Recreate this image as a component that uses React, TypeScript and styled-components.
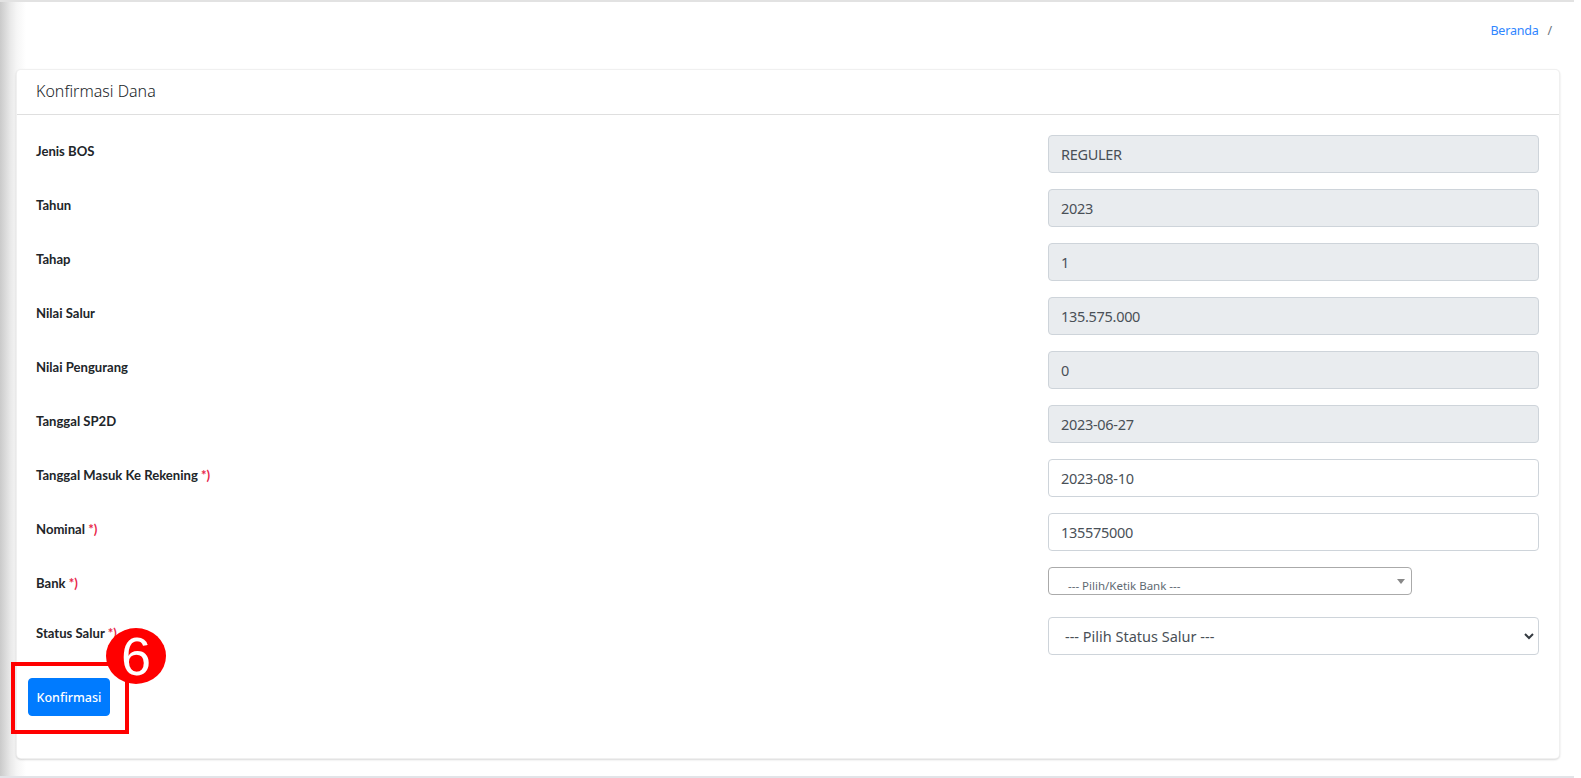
import React from "react";
import styled, { createGlobalStyle } from "styled-components";

const Global = createGlobalStyle`
  html, body { margin: 0; padding: 0; height: 100%; overflow: hidden; background: #fff; }
  body { font-family: "Noto Sans", "Open Sans", sans-serif; color: #212529; }
`;

const Page = styled.div`
  position: relative;
  width: 1581px;
  height: 778px;
  display: flex;
  flex-direction: column;
  background: #fff;
  overflow: hidden;
`;
const LeftShade = styled.div`
  position: absolute;
  left: 0;
  top: 0;
  bottom: 0;
  width: 26px;
  background: linear-gradient(to right, #cacaca 0, #e9e9e9 40%, #f6f6f6 65%, rgba(255,255,255,0) 100%);
  pointer-events: none;
`;
const Content = styled.main`
  position: relative;
  width: 1574px;
  height: 778px;
  box-sizing: border-box;
  border-top: 2px solid #e2e2e2;
  border-bottom: 2px solid #e2e4e8;
  padding: 0 14px 0 16px;
  display: flex;
  flex-direction: column;
`;
const Crumbs = styled.nav`
  height: 67px;
  box-sizing: border-box;
  padding: 20px 8px 0 0;
  display: flex;
  justify-content: flex-end;
  gap: 9px;
  font-size: 12.5px;
  letter-spacing: -0.2px;
  line-height: 18px;
`;
const CrumbLink = styled.a`
  color: #2f86ff;
`;
const CrumbSep = styled.span`
  color: #6c757d;
`;
const Card = styled.section`
  width: 1544px;
  height: 690px;
  box-sizing: border-box;
  background: #fff;
  border: 1px solid rgba(0,0,0,.06);
  border-radius: 5px;
  box-shadow: 0 1px 2px rgba(0,0,0,.15);
  display: flex;
  flex-direction: column;
`;
const CardHeader = styled.header`
  height: 45px;
  box-sizing: border-box;
  padding: 0 19px 2px;
  display: flex;
  align-items: center;
  border-bottom: 1px solid #dfdfdf;
  font-size: 16px;
  font-weight: 300;
  color: #212529;
`;
const CardBody = styled.div`
  padding: 20px 19px 0 19px;
  display: flex;
  flex-direction: column;
  gap: 16px;
`;
const Row = styled.div<{ $short?: boolean }>`
  height: ${(p) => (p.$short ? "34px" : "38px")};
  display: grid;
  grid-template-columns: 1012px 1fr;
`;
const Label = styled.label`
  font-family: "Lato", "Noto Sans", sans-serif;
  font-size: 13.1px;
  font-weight: 700;
  line-height: 18px;
  padding-top: 7px;
  color: #212529;
`;
const Req = styled.span`
  color: #e8264a;
`;
const Field = styled.div<{ $disabled?: boolean }>`
  height: 38px;
  width: 491px;
  box-sizing: border-box;
  border: 1px solid #ced4da;
  border-radius: 4px;
  background: ${(p) => (p.$disabled ? "#e9ecef" : "#fff")};
  padding: 0 12px;
  display: flex;
  align-items: center;
  font-size: 14.5px;
  letter-spacing: -0.3px;
  color: #495057;
`;
const BankSelect = styled.div`
  position: relative;
  width: 364px;
  height: 28px;
  box-sizing: border-box;
  border: 1px solid #aaa;
  border-radius: 4px;
  background: #fff;
  padding: 10px 0 0 19px;
  font-size: 11.5px;
  line-height: 16px;
  color: #5f6a72;
  overflow: hidden;
`;
const BankArrow = styled.span`
  position: absolute;
  right: 6px;
  top: 11px;
  width: 0;
  height: 0;
  border-left: 4px solid transparent;
  border-right: 4px solid transparent;
  border-top: 5px solid #888;
`;
const StatusSelect = styled(Field)`
  justify-content: space-between;
  padding: 0 3px 0 16px;
  letter-spacing: 0;
`;
const Footer = styled.div`
  padding: 23px 0 0 11px;
`;
const Button = styled.button`
  width: 82px;
  height: 38px;
  box-sizing: border-box;
  border: 1px solid #007bff;
  border-radius: 4px;
  background: #007bff;
  color: #fff;
  font: 500 12.5px "Noto Sans", sans-serif;
  padding: 0;
`;
const Callout = styled.div`
  position: absolute;
  left: 11px;
  top: 662px;
  width: 118px;
  height: 72px;
  box-sizing: border-box;
  border: 4px solid #f00;
`;
const Badge = styled.div`
  position: absolute;
  left: 106px;
  top: 628px;
  width: 60px;
  height: 56px;
  border-radius: 50%;
  background: #f00;
  color: #fff;
  font: 400 54px/56px "Liberation Sans", sans-serif;
  text-align: center;
`;

const rows: [string, string][] = [
  ["Jenis BOS", "REGULER"],
  ["Tahun", "2023"],
  ["Tahap", "1"],
  ["Nilai Salur", "135.575.000"],
  ["Nilai Pengurang", "0"],
  ["Tanggal SP2D", "2023-06-27"],
];

export default function App() {
  return (
    <Page>
      <Global />
      <LeftShade />
      <Content>
        <Crumbs>
          <CrumbLink>Beranda</CrumbLink>
          <CrumbSep>/</CrumbSep>
        </Crumbs>
        <Card>
          <CardHeader>Konfirmasi Dana</CardHeader>
          <CardBody>
            {rows.map(([l, v]) => (
              <Row key={l}>
                <Label>{l}</Label>
                <Field $disabled>{v}</Field>
              </Row>
            ))}
            <Row>
              <Label>Tanggal Masuk Ke Rekening <Req>*)</Req></Label>
              <Field>2023-08-10</Field>
            </Row>
            <Row>
              <Label>Nominal <Req>*)</Req></Label>
              <Field>135575000</Field>
            </Row>
            <Row $short>
              <Label>Bank <Req>*)</Req></Label>
              <BankSelect>--- Pilih/Ketik Bank ---<BankArrow /></BankSelect>
            </Row>
            <Row>
              <Label>Status Salur <Req>*)</Req></Label>
              <StatusSelect>
                --- Pilih Status Salur ---
                <svg width="12" height="12" viewBox="0 0 12 12" fill="none" stroke="#343a40" strokeWidth="2"><path d="M2 4l4 4 4-4" /></svg>
              </StatusSelect>
            </Row>
          </CardBody>
          <Footer><Button>Konfirmasi</Button></Footer>
        </Card>
      </Content>
      <Callout />
      <Badge>6</Badge>
    </Page>
  );
}
